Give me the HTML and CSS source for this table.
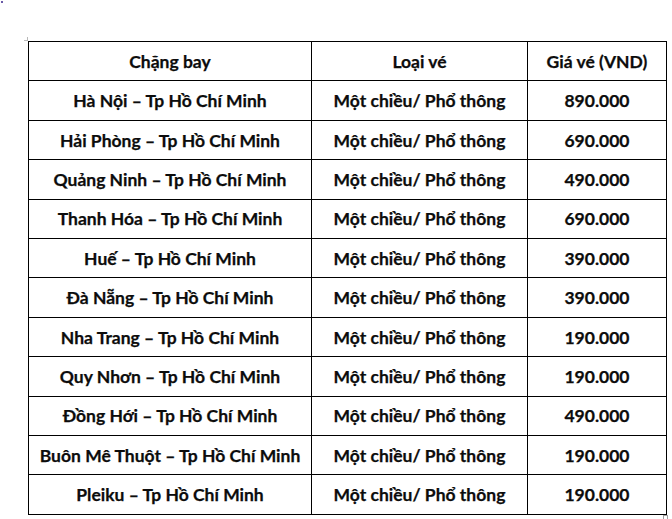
FILE: index.html
```html
<!DOCTYPE html>
<html lang="vi">
<head>
<meta charset="utf-8">
<title>Giá vé</title>
<link rel="stylesheet" href="styles.css">
</head>
<body>
<div class="page">
  <span class="dot"></span>
  <div class="wrap">
    <span class="anchor"></span>
    <table class="fares">
      <colgroup>
        <col class="c1"><col class="c2"><col class="c3">
      </colgroup>
      <thead>
        <tr><th>Chặng bay</th><th>Loại vé</th><th>Giá vé (VND)</th></tr>
      </thead>
      <tbody>
        <tr><td>Hà Nội – Tp Hồ Chí Minh</td><td>Một chiều/ Phổ thông</td><td>890.000</td></tr>
        <tr><td>Hải Phòng – Tp Hồ Chí Minh</td><td>Một chiều/ Phổ thông</td><td>690.000</td></tr>
        <tr><td>Quảng Ninh – Tp Hồ Chí Minh</td><td>Một chiều/ Phổ thông</td><td>490.000</td></tr>
        <tr><td>Thanh Hóa – Tp Hồ Chí Minh</td><td>Một chiều/ Phổ thông</td><td>690.000</td></tr>
        <tr><td>Huế – Tp Hồ Chí Minh</td><td>Một chiều/ Phổ thông</td><td>390.000</td></tr>
        <tr><td>Đà Nẵng – Tp Hồ Chí Minh</td><td>Một chiều/ Phổ thông</td><td>390.000</td></tr>
        <tr><td>Nha Trang – Tp Hồ Chí Minh</td><td>Một chiều/ Phổ thông</td><td>190.000</td></tr>
        <tr><td>Quy Nhơn – Tp Hồ Chí Minh</td><td>Một chiều/ Phổ thông</td><td>190.000</td></tr>
        <tr><td>Đồng Hới – Tp Hồ Chí Minh</td><td>Một chiều/ Phổ thông</td><td>490.000</td></tr>
        <tr><td>Buôn Mê Thuột – Tp Hồ Chí Minh</td><td>Một chiều/ Phổ thông</td><td>190.000</td></tr>
        <tr><td>Pleiku – Tp Hồ Chí Minh</td><td>Một chiều/ Phổ thông</td><td>190.000</td></tr>
      </tbody>
    </table>
    <span class="resize"></span>
  </div>
</div>
</body>
</html>
```
FILE: styles.css
```css
html, body {
  margin: 0;
  padding: 0;
  background: #ffffff;
}
.page {
  position: relative;
  width: 672px;
  height: 519px;
  padding: 41px 0 0 28px;
  box-sizing: border-box;
}
.dot {
  position: absolute;
  left: 1px;
  top: 1px;
  width: 2px;
  height: 2px;
  background: #6a5aa8;
}
.wrap {
  position: relative;
  width: 638px;
}
.anchor {
  position: absolute;
  left: -4px;
  top: -4px;
  width: 4px;
  height: 4px;
  border-right: 1px solid #b8b8b8;
  border-bottom: 1px solid #b8b8b8;
  box-sizing: border-box;
}
.resize {
  position: absolute;
  right: -2px;
  bottom: -5px;
  width: 5px;
  height: 5px;
  border: 1px solid #a0a0a0;
  box-sizing: border-box;
  background: #fff;
}
.fares {
  width: 638px;
  border-collapse: collapse;
  table-layout: fixed;
  font-family: "Lato", "Open Sans", sans-serif;
  font-weight: 700;
  font-size: 17.5px;
  color: #0c0c0c;
  -webkit-text-stroke: 0.25px #0c0c0c;
}
.c1 { width: 283px; }
.c2 { width: 216px; }
.c3 { width: 139px; }
.fares th,
.fares td {
  border: 1.5px solid #000;
  height: 38.42px;
  padding: 0;
  text-align: center;
  vertical-align: middle;
  font-weight: 700;
  white-space: nowrap;
}
```
